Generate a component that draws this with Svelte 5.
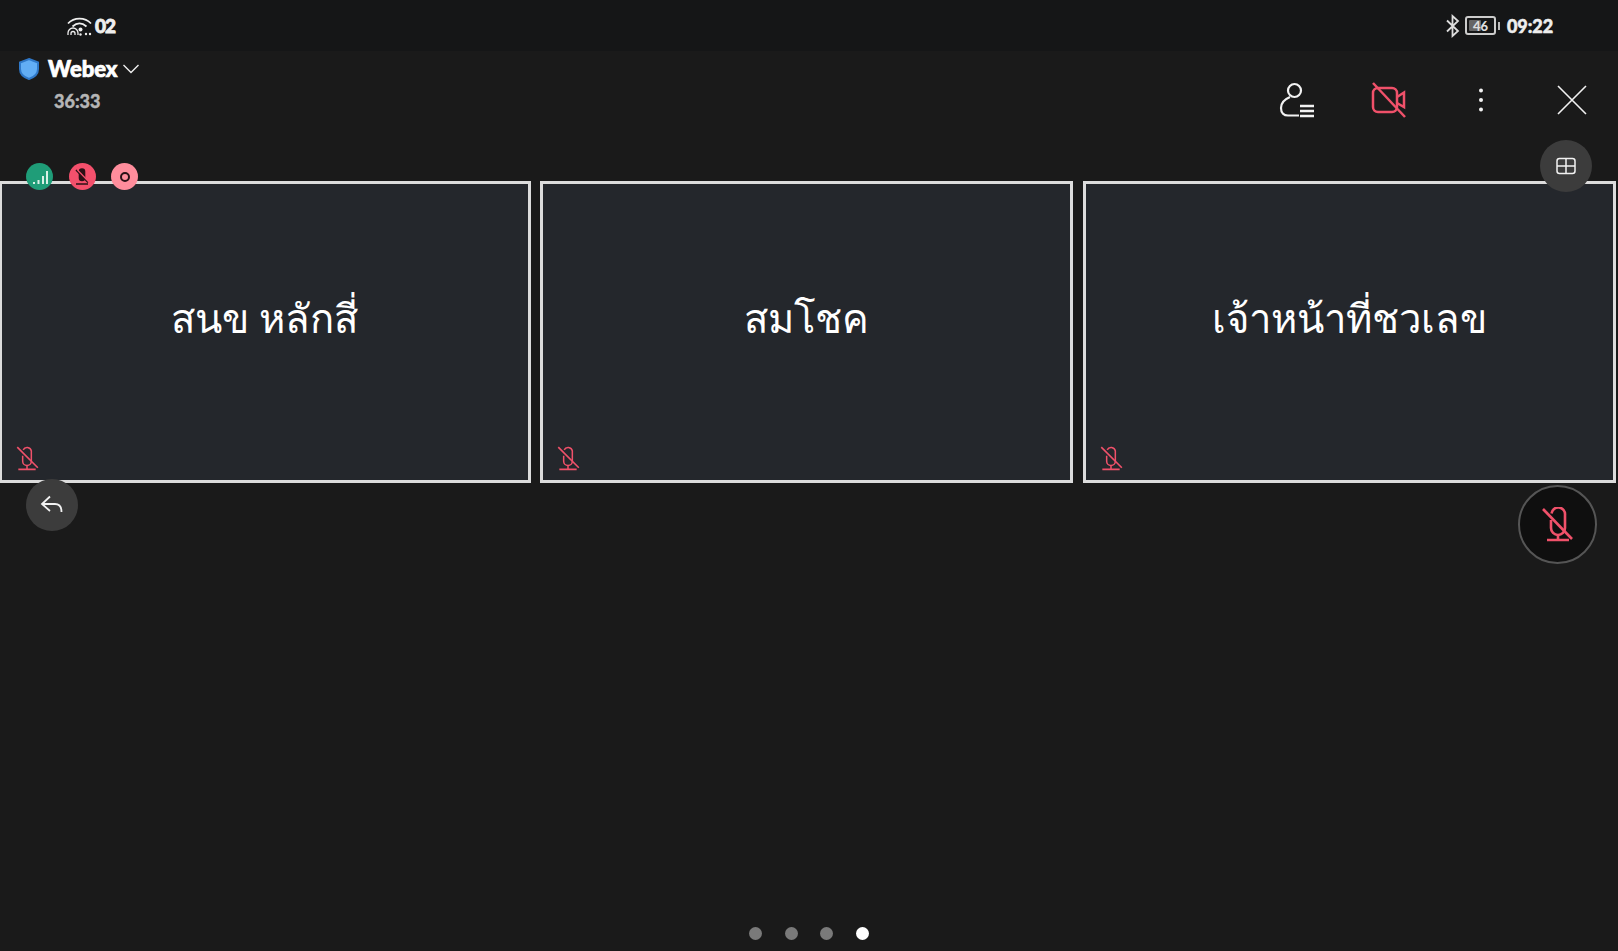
<script>
  const tiles = ['สนข หลักสี่', 'สมโชค', 'เจ้าหน้าที่ชวเลข'];
  const dots = [false, false, false, true];
</script>

<div class="screen">
  <div class="status">
    <div class="st-left">
      <svg class="wifi" width="26" height="20" viewBox="0 0 26 20" fill="none" stroke="#eee">
        <path d="M1 7.500C7 1 18 1 24 7.500" stroke-width="1.800"/>
        <path d="M5.500 10.500C10 6.500 15 6.500 19.500 10.500" stroke-width="1.800"/>
        <path d="M1 19V17A5 5 0 0 1 11 17V19M4 19V17.500A2 2 0 0 1 8 17.500V19" stroke-width="1.300"/>
        <circle cx="13.500" cy="13.500" r="2" fill="#eee" stroke="none"/>
        <circle cx="13.500" cy="18.500" r="1.200" fill="#eee" stroke="none"/>
        <circle cx="19" cy="18" r="1.200" fill="#eee" stroke="none"/>
        <circle cx="23" cy="18" r="1.200" fill="#eee" stroke="none"/>
      </svg>
      <span class="sim">02</span>
    </div>
    <div class="st-right">
      <svg width="16" height="24" viewBox="0 0 16 24" fill="none" stroke="#ddd" stroke-width="1.800"><path d="M2 6.500L13 17L7.500 22V2L13 7L2 17.500"/></svg>
      <div class="battery"><span class="level"></span><span class="pct">46</span></div>
      <span class="cap"></span>
      <span class="clock">09:22</span>
    </div>
  </div>

  <header class="bar">
    <div class="title">
      <div class="name-row">
        <svg width="22" height="24" viewBox="0 0 22 24"><path d="M11 2L20 5.500V12C20 17 15.500 20.500 11 22C6.500 20.500 2 17 2 12V5.500Z" fill="#62aef5" stroke="#2f78c8" stroke-width="2"/></svg>
        <span class="name">Webex</span>
        <svg width="18" height="12" viewBox="0 0 18 12" fill="none" stroke="#eee" stroke-width="1.400"><path d="M1.500 2L9 9.500L16.500 2"/></svg>
      </div>
      <span class="timer">36:33</span>
    </div>
    <div class="actions">
      <svg width="36" height="36" viewBox="0 0 36 36" fill="none" stroke="#f2f2f2" stroke-width="2.200">
        <circle cx="15.500" cy="8.500" r="6.500"/>
        <path d="M11 15C5 17.500 2 21 2 26C2 31 5 33.500 9 33.500H20"/>
        <path d="M21 24H35M21 29H35M21 34H35" stroke-width="2.600"/>
      </svg>
      <svg width="36" height="36" viewBox="0 0 36 36" fill="none" stroke="#f0516a" stroke-width="2.500">
        <rect x="2" y="6" width="24" height="24" rx="5"/>
        <path d="M26 15L33 10.500V25L26 21"/>
        <path d="M2 1L34 35" stroke-width="2.500"/>
      </svg>
      <svg width="36" height="36" viewBox="0 0 36 36" fill="#f2f2f2"><circle cx="18" cy="8.500" r="2"/><circle cx="18" cy="18" r="2"/><circle cx="18" cy="27.500" r="2"/></svg>
      <svg class="close" width="36" height="36" viewBox="0 0 36 36" fill="none" stroke="#f2f2f2" stroke-width="1.600"><path d="M4 4L32 32M32 4L4 32"/></svg>
    </div>
  </header>

  <main class="grid">
    {#each tiles as tile}
      <section class="tile">
        <h2>{tile}</h2>
        <svg class="tile-mic" width="26" height="26" viewBox="0 0 24 24" fill="none" stroke="#f0516a" stroke-width="1.400">
          <path d="M8.500 4.500A4 4 0 0 1 16 5.500V15A4 4 0 0 1 8 15V10"/>
          <path d="M12 19V22.500M4 22.500H20"/>
          <path d="M3 2L22 21" stroke-width="1.500"/>
        </svg>
      </section>
    {/each}

    <div class="badges">
      <span class="badge green">
        <svg width="18" height="18" viewBox="0 0 18 18" fill="#d8f0e6"><rect x="2" y="14" width="2" height="2"/><rect x="6.500" y="12" width="2" height="4"/><rect x="11" y="8" width="2" height="8"/><rect x="15" y="3" width="2" height="13"/></svg>
      </span>
      <span class="badge red">
        <svg width="18" height="18" viewBox="0 0 18 18" fill="none" stroke="#2a1116" stroke-width="1.600"><path d="M6.500 3.500A2.500 2.500 0 0 1 11.500 3.500V10A2.500 2.500 0 0 1 6.500 10Z" fill="#2a1116"/><path d="M3 16H15M3 2L15 14.500" stroke="#2a1116"/><path d="M4.500 2L16 14" stroke="#f4506c" stroke-width="1.200"/></svg>
      </span>
      <span class="badge pink"><span class="ring"></span></span>
    </div>

    <button class="fab layout" aria-label="Layout">
      <svg width="20" height="18" viewBox="0 0 20 18" fill="none" stroke="#f2f2f2" stroke-width="1.500"><rect x="1" y="1.500" width="18" height="15" rx="2.500"/><path d="M1 9H19M10 1.500V16.500"/></svg>
    </button>
    <button class="fab back" aria-label="Back">
      <svg width="24" height="22" viewBox="0 0 24 22" fill="none" stroke="#f2f2f2" stroke-width="1.800"><path d="M10 2.500L2 10L10 17"/><path d="M2 10H15C19 10 21.500 13 21.500 18"/></svg>
    </button>
    <button class="mute" aria-label="Mute">
      <svg width="36" height="36" viewBox="0 0 36 36" fill="none" stroke="#f0516a" stroke-width="2.600">
        <path d="M11.500 6.500A6.500 6.500 0 0 1 25 8V21A7 7 0 0 1 11 21V13"/>
        <path d="M18 28V33M7 33H29"/>
        <path d="M3 2L32 32"/>
      </svg>
    </button>
  </main>

  <nav class="dots">
    {#each dots as on}
      <span class="dot" class:on></span>
    {/each}
  </nav>
</div>

<style>
  :global(body) {
    margin: 0;
    background: #1a1a1a;
  }
  .screen {
    width: 1618px;
    height: 951px;
    display: flex;
    flex-direction: column;
    background: #1a1a1a;
    color: #fff;
    font-family: "Lato", "Noto Sans", "DejaVu Sans", sans-serif;
    overflow: hidden;
  }
  .status {
    height: 51px;
    flex: none;
    box-sizing: border-box;
    padding: 0 65px 0 67px;
    background: #151617;
    display: flex;
    justify-content: space-between;
    align-items: center;
  }
  .st-left, .st-right {
    display: flex;
    align-items: center;
  }
  .sim {
    font-size: 19px;
    font-weight: 900;
    margin-left: 2px;
    color: #eee;
    letter-spacing: -1px;
    -webkit-text-stroke: 0.8px #eee;
  }
  .st-right svg { margin-right: 4px; }
  .battery {
    position: relative;
    width: 27px;
    height: 15px;
    border: 2px solid #ccc;
    border-radius: 3px;
    display: flex;
    align-items: center;
    justify-content: center;
  }
  .level {
    position: absolute;
    left: 2px;
    top: 2px;
    bottom: 2px;
    width: 45%;
    background: #666;
    border-radius: 1px;
  }
  .pct {
    position: relative;
    font-size: 13px;
    font-weight: 900;
    color: #ddd;
  }
  .cap {
    width: 2px;
    height: 8px;
    background: #bbb;
    margin: 0 7px 0 2px;
  }
  .clock {
    font-size: 18px;
    font-weight: 900;
    color: #eee;
    letter-spacing: -0.1px;
    -webkit-text-stroke: 0.5px #eee;
  }
  .bar {
    flex: none;
    height: 130px;
    box-sizing: border-box;
    display: flex;
    justify-content: space-between;
    padding: 6px 28px 0 18px;
  }
  .name-row {
    display: flex;
    align-items: center;
    gap: 4px;
    height: 24px;
  }
  .name {
    font-size: 22px;
    font-weight: 900;
    line-height: 24px;
    margin-left: 4px;
    -webkit-text-stroke: 0.7px #fff;
  }
  .timer {
    display: block;
    margin: 9px 0 0 36px;
    font-size: 18px;
    font-weight: 900;
    color: #b5b5b5;
    line-height: 22px;
    -webkit-text-stroke: 0.4px #b5b5b5;
  }
  .actions {
    display: flex;
    gap: 56px;
    padding-top: 25px;
    align-items: flex-start;
  }
  .close { margin-left: -1px; }
  .grid {
    position: relative;
    display: grid;
    grid-template-columns: 531.500px 533px 533px;
    column-gap: 9.500px;
    height: 302px;
    flex: none;
    margin-left: -1px;
  }
  .tile {
    position: relative;
    box-sizing: border-box;
    height: 302px;
    border: 3px solid #dcdcdc;
    background: #24272c;
    display: flex;
    justify-content: center;
    padding-top: 109px;
  }
  h2 {
    margin: 0;
    font-size: 40px;
    font-weight: 400;
    line-height: 50px;
    color: #fff;
  }
  .tile-mic {
    position: absolute;
    left: 12px;
    bottom: 9px;
  }
  .badges {
    position: absolute;
    left: 27px;
    top: -18px;
    display: flex;
    gap: 15.500px;
  }
  .badge {
    width: 27px;
    height: 27px;
    border-radius: 50%;
    display: flex;
    align-items: center;
    justify-content: center;
  }
  .green { background: #1f9d78; }
  .red { background: #f4506c; }
  .pink { background: #ff8d9c; }
  .ring {
    width: 6px;
    height: 6px;
    border: 2px solid #2a1116;
    border-radius: 50%;
  }
  .fab {
    position: absolute;
    width: 52px;
    height: 52px;
    border: 0;
    padding: 0;
    border-radius: 50%;
    background: #3c3c3c;
    display: flex;
    align-items: center;
    justify-content: center;
  }
  .layout { right: 26px; top: -41px; }
  .back { left: 27px; top: 298px; }
  .mute {
    position: absolute;
    right: 21px;
    top: 304px;
    width: 79px;
    height: 79px;
    box-sizing: border-box;
    border: 2px solid #555;
    border-radius: 50%;
    background: #0f0f0f;
    padding: 0;
    display: flex;
    align-items: center;
    justify-content: center;
  }
  .dots {
    margin-top: auto;
    height: 24px;
    display: flex;
    gap: 22.400px;
    justify-content: center;
    align-items: flex-start;
    box-sizing: border-box;
  }
  .dot {
    width: 13px;
    height: 13px;
    border-radius: 50%;
    background: #7a7a7a;
  }
  .dot.on { background: #fff; }
</style>
